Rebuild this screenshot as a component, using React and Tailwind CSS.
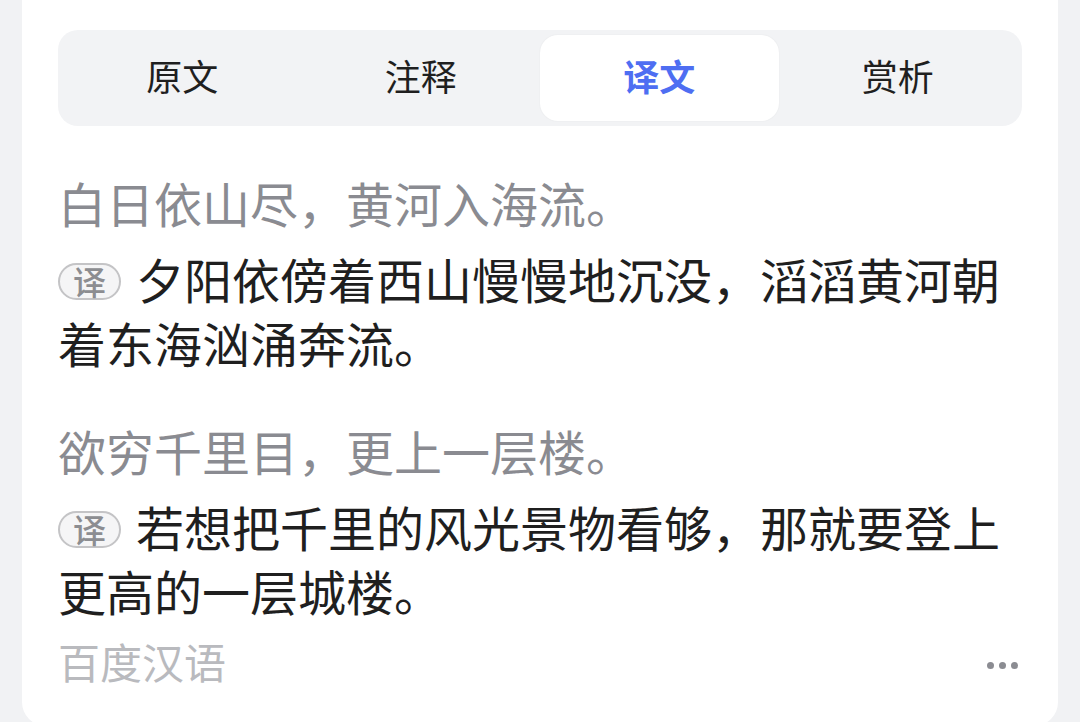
import React, { useState } from 'react';

const tabs = ['原文', '注释', '译文', '赏析'];

const stanzas = [
    {
        line: '白日依山尽，黄河入海流。',
        trans: '夕阳依傍着西山慢慢地沉没，滔滔黄河朝着东海汹涌奔流。',
    },
    {
        line: '欲穷千里目，更上一层楼。',
        trans: '若想把千里的风光景物看够，那就要登上更高的一层城楼。',
    },
];

const Badge = () => (
    <span className="inline-block align-middle w-[63px] h-[37px] mr-[15px] relative -top-[4px] rounded-full border-2 border-[#c4c4c6] bg-[#f5f5f6] text-center text-[33px] leading-[32px] font-medium text-[#8c8d91]">
        译
    </span>
);

const App = () => {
    const [active, setActive] = useState(2);

    return (
        <div
            className="h-[722px] overflow-hidden bg-[#f1f2f4] px-[22px]"
            style={{ fontFamily: '"Noto Sans CJK SC", "Noto Sans", sans-serif' }}
        >
            <div className="h-[726px] bg-white rounded-b-[24px] px-[36px] pt-[30px]">
                {/* Tabs */}
                <div className="grid grid-cols-4 h-[96px] p-[5px] rounded-[20px] bg-[#f2f3f5]">
                    {tabs.map((t, i) => (
                        <button
                            key={t}
                            onClick={() => setActive(i)}
                            className={
                                i === active
                                    ? 'rounded-[18px] bg-white pb-[6px] text-[36px] font-bold text-[#4e6ef2] shadow-[0_0_2px_rgba(0,0,0,0.06)]'
                                    : 'rounded-[18px] pb-[6px] text-[36px] text-[#1f1f1f]'
                            }
                        >
                            {t}
                        </button>
                    ))}
                </div>

                {/* Poem + translation */}
                <div className="pt-[44px]">
                    {stanzas.map((s, i) => (
                        <div key={i} className={i > 0 ? 'mt-[44px]' : ''}>
                            <div className="text-[48px] leading-[64px] text-[#8a8b91]">{s.line}</div>
                            <div className="mt-[12px] text-[48px] leading-[64px] text-[#1f1f1f]">
                                <Badge />
                                {s.trans}
                            </div>
                        </div>
                    ))}
                </div>

                {/* Footer */}
                <div className="mt-[11px] flex items-center justify-between">
                    <span className="text-[42px] leading-[56px] text-[#b9babe]">百度汉语</span>
                    <div className="flex gap-[5px] mr-[4px] mt-[8px]">
                        <span className="w-[7px] h-[7px] rounded-full bg-[#8b8c92]"></span>
                        <span className="w-[7px] h-[7px] rounded-full bg-[#8b8c92]"></span>
                        <span className="w-[7px] h-[7px] rounded-full bg-[#8b8c92]"></span>
                    </div>
                </div>
            </div>
        </div>
    );
};

export default App;
